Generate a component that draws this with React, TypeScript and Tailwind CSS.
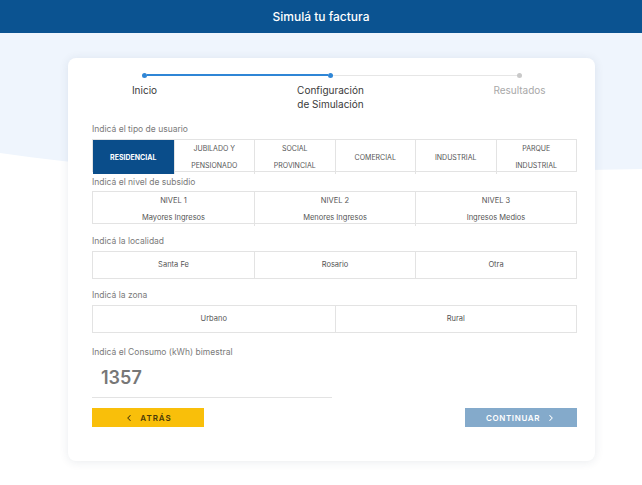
import React from 'react';
import { ChevronLeft, ChevronRight } from 'lucide-react';

const userTypes = [
  ['RESIDENCIAL'],
  ['JUBILADO Y', 'PENSIONADO'],
  ['SOCIAL', 'PROVINCIAL'],
  ['COMERCIAL'],
  ['INDUSTRIAL'],
  ['PARQUE', 'INDUSTRIAL'],
];

const subsidyLevels = [
  { level: 'NIVEL 1', label: 'Mayores Ingresos' },
  { level: 'NIVEL 2', label: 'Menores Ingresos' },
  { level: 'NIVEL 3', label: 'Ingresos Medios' },
];

const FieldLabel: React.FC<{ children: React.ReactNode; className?: string }> = ({ children, className = '' }) => (
  <p className={`text-[8.5px] leading-[12px] text-[#7a7a7a] ${className}`}>{children}</p>
);

const Step: React.FC<{ lines: string[]; active: boolean }> = ({ lines, active }) => (
  <div className="flex w-[5px] flex-col items-center">
    <span className={`h-[5px] w-[5px] rounded-full ${active ? 'bg-[#2f86d6]' : 'bg-[#c9c9c9]'}`} />
    <div className={`mt-[5px] whitespace-nowrap text-center text-[10px] leading-[14px] ${active ? 'text-[#3a3a3a]' : 'text-[#a8a8a8]'}`}>
      {lines.map((line) => (
        <div key={line}>{line}</div>
      ))}
    </div>
  </div>
);

export default function App() {
  return (
    <div className="relative min-h-screen bg-white" style={{ fontFamily: 'Inter, "Noto Sans", sans-serif' }}>
      <header className="flex h-[33px] items-center justify-center bg-[#0b5391] text-[12px] font-medium text-white">
        Simulá tu factura
      </header>

      <svg className="absolute left-0 top-[33px] h-[140px] w-full" viewBox="0 0 642 140" preserveAspectRatio="none" aria-hidden="true">
        <path d="M0 0 H642 V136 C 420 140, 200 150, 0 120 Z" fill="#eff5fd" />
      </svg>

      <main className="relative px-[68px] pt-[25px] pb-6">
        <div className="w-[527px] rounded-lg bg-white pl-[24px] pr-[18px] pt-[14.5px] pb-[34px] shadow-[0_1px_10px_rgba(40,60,90,0.10)]">
          {/* stepper */}
          <div className="flex items-start pl-[50px]">
            <Step lines={['Inicio']} active />
            <span className="mt-[1.5px] h-[2px] w-[181px] bg-[#2f86d6]" />
            <Step lines={['Configuración', 'de Simulación']} active />
            <span className="mt-[2px] h-px w-[184px] bg-[#e6e6e6]" />
            <Step lines={['Resultados']} active={false} />
          </div>

          <FieldLabel className="mt-[12.5px]">Indicá el tipo de usuario</FieldLabel>
          <div className="mt-[4px] grid h-[33px] grid-cols-6 border border-[#e3e3e3]">
            {userTypes.map((lines, i) => (
              <button
                key={lines.join(' ')}
                className={`flex flex-col items-center justify-center border-[#e3e3e3] text-[7px] leading-[17px] ${
                  i > 0 ? 'border-l' : ''
                } ${i === 0 ? 'bg-[#0a4d8a] font-bold text-white' : 'text-[#555]'}`}
              >
                {lines.map((l) => (
                  <span key={l}>{l}</span>
                ))}
              </button>
            ))}
          </div>

          <FieldLabel className="mt-[4px]">Indicá el nivel de subsidio</FieldLabel>
          <div className="mt-[3px] grid h-[33px] grid-cols-3 border border-[#e3e3e3]">
            {subsidyLevels.map((s, i) => (
              <button
                key={s.level}
                className={`flex flex-col items-center justify-center border-[#e3e3e3] text-[7.5px] leading-[17px] text-[#555] ${i > 0 ? 'border-l' : ''}`}
              >
                <span>{s.level}</span>
                <span>{s.label}</span>
              </button>
            ))}
          </div>

          <FieldLabel className="mt-[11px]">Indicá la localidad</FieldLabel>
          <div className="mt-[4px] grid h-[28px] grid-cols-3 border border-[#e3e3e3]">
            {['Santa Fe', 'Rosario', 'Otra'].map((l, i) => (
              <button key={l} className={`border-[#e3e3e3] text-[7.5px] text-[#555] ${i > 0 ? 'border-l' : ''}`}>
                {l}
              </button>
            ))}
          </div>

          <FieldLabel className="mt-[10px]">Indicá la zona</FieldLabel>
          <div className="mt-[4px] grid h-[28px] grid-cols-2 border border-[#e3e3e3]">
            {['Urbano', 'Rural'].map((l, i) => (
              <button key={l} className={`border-[#e3e3e3] text-[7.5px] text-[#555] ${i > 0 ? 'border-l' : ''}`}>
                {l}
              </button>
            ))}
          </div>

          <FieldLabel className="mt-[13px]">Indicá el Consumo (kWh) bimestral</FieldLabel>
          <div className="flex h-[40px] w-[240px] items-center border-b border-[#e3e3e3] pl-[9px]">
            <span className="text-[18px] font-semibold text-[#777]">1357</span>
          </div>

          <div className="mt-[10px] flex items-center justify-between">
            <button className="flex h-[19px] w-[112px] items-center justify-center gap-[6px] bg-[#f9bf0a] text-[8px] font-semibold tracking-[0.12em] text-[#4a3a08]">
              <ChevronLeft className="h-[10px] w-[10px]" strokeWidth={2.5} />
              ATRÁS
            </button>
            <button className="flex h-[19px] w-[112px] items-center justify-center gap-[6px] bg-[#84aacb] text-[8px] font-semibold tracking-[0.08em] text-white">
              CONTINUAR
              <ChevronRight className="h-[10px] w-[10px]" strokeWidth={2.5} />
            </button>
          </div>
        </div>
      </main>
    </div>
  );
}
